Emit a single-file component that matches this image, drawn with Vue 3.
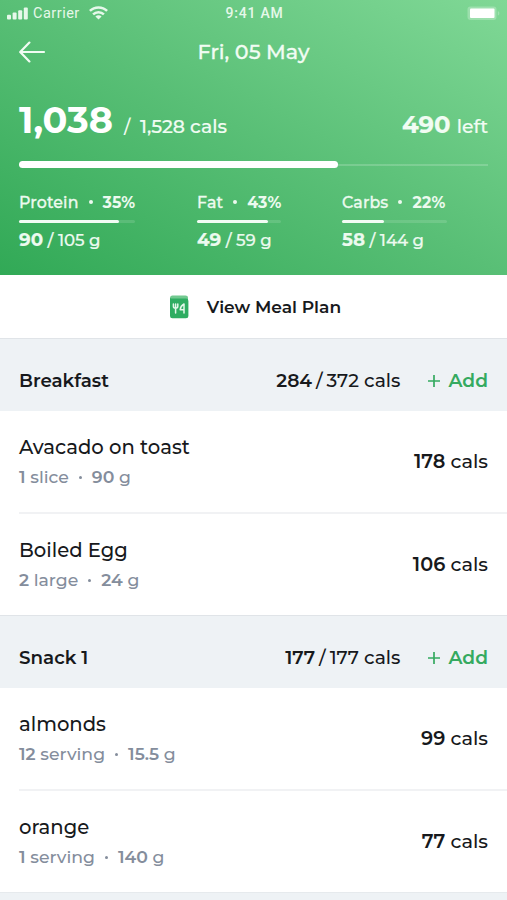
<script setup>
const macros = [
  { name: 'Protein', share: '35%', eaten: '90', goal: '105', fill: 86.5 },
  { name: 'Fat', share: '43%', eaten: '49', goal: '59', fill: 84.5 },
  { name: 'Carbs', share: '22%', eaten: '58', goal: '144', fill: 40 }
];

const meals = [
  {
    name: 'Breakfast',
    eaten: '284',
    goal: '372',
    items: [
      { name: 'Avacado on toast', count: '1', unit: 'slice', weight: '90', cals: '178' },
      { name: 'Boiled Egg', count: '2', unit: 'large', weight: '24', cals: '106' }
    ]
  },
  {
    name: 'Snack 1',
    eaten: '177',
    goal: '177',
    items: [
      { name: 'almonds', count: '12', unit: 'serving', weight: '15.5', cals: '99' },
      { name: 'orange', count: '1', unit: 'serving', weight: '140', cals: '77' }
    ]
  }
];
</script>

<template>
  <div class="screen">
    <header class="summary">
      <div class="status-bar">
        <div class="status-left">
          <svg class="signal" width="21" height="13" viewBox="0 0 21 13" fill="currentColor">
            <rect x="0" y="7.8" width="4" height="4.8" rx="1" />
            <rect x="5.6" y="5.6" width="4" height="7" rx="1" />
            <rect x="11.2" y="3.2" width="4" height="9.4" rx="1" />
            <rect x="16.8" y="0.6" width="4" height="12" rx="1" />
          </svg>
          <span class="carrier">Carrier</span>
          <svg class="wifi" width="19" height="14" viewBox="0 0 19 14" fill="none" stroke="currentColor">
            <path d="M0.9 4.9C5.6 0.3 13.4 0.3 18.1 4.9" stroke-width="2.5" />
            <path d="M4.1 8.3C7.1 5.4 11.9 5.4 14.9 8.3" stroke-width="2.5" />
            <path d="M9.5 13.4L6.4 10.5C8.1 8.9 10.9 8.9 12.6 10.5Z" fill="currentColor" stroke="none" />
          </svg>
        </div>
        <span class="clock">9:41 AM</span>
        <svg class="battery" width="33" height="15" viewBox="0 0 33 15" fill="#fff">
          <rect x="0.5" y="0.5" width="29" height="13.5" rx="3" fill-opacity="0.25" />
          <rect x="3" y="2.5" width="24.5" height="9.5" rx="1" />
          <path d="M30.8 5C32.9 5.9 32.9 8.7 30.8 9.6Z" fill-opacity="0.25" />
        </svg>
      </div>

      <nav class="nav">
        <svg width="27" height="22" viewBox="0 0 27 22" fill="none" stroke="currentColor" stroke-width="2.2" stroke-linecap="round" stroke-linejoin="round">
          <path d="M25 11H1.3M10.4 1.6L1.2 11L10.4 20.4" />
        </svg>
        <h1>Fri, 05 May</h1>
      </nav>

      <div class="totals">
        <span class="eaten">1,038</span>
        <span class="slash">/</span>
        <span class="goal">1,528 cals</span>
        <span class="left"><b>490</b> left</span>
      </div>
      <div class="total-track"><div class="total-fill"></div></div>

      <div class="macros">
        <div v-for="macro in macros" :key="macro.name" class="macro" :class="macro.name.toLowerCase()">
          <div class="macro-head">
            <span>{{ macro.name }}</span>
            <i class="dot"></i>
            <b>{{ macro.share }}</b>
          </div>
          <div class="macro-track">
            <div class="macro-fill" :style="{ width: macro.fill + '%' }"></div>
          </div>
          <div class="macro-value">
            <b>{{ macro.eaten }}</b>
            <i>/</i>
            <span>{{ macro.goal }} g</span>
          </div>
        </div>
      </div>
    </header>

    <div class="plan">
      <svg width="20" height="24" viewBox="0 0 20 24">
        <path d="M3.5 0.5H16.5Q19 0.5 19 2.5V6H1V3Q1 0.5 3.5 0.5Z" fill="#72c990" />
        <path d="M1 3Q1.8 3.6 3.5 3.6H17Q19.4 3.6 19.4 6V21Q19.4 23.3 17 23.3H3.4Q1 23.3 1 21Z" fill="#2fad62" />
        <g fill="none" stroke="#e4f7ea" stroke-width="1.5" stroke-linecap="round" stroke-linejoin="round">
          <path d="M4.4 9V11.2Q4.4 13.2 6.6 13.2Q8.8 13.2 8.8 11.2V9M6.6 9V18" />
          <path d="M15 18V9Q11.6 10.8 11.2 14.8H15" />
        </g>
      </svg>
      <span>View Meal Plan</span>
    </div>

    <section v-for="meal in meals" :key="meal.name" class="meal">
      <div class="meal-head">
        <h2>{{ meal.name }}</h2>
        <div class="meal-total">
          <b>{{ meal.eaten }}</b>
          <i>/</i>
          <span>{{ meal.goal }} cals</span>
        </div>
        <button type="button">
          <svg width="12" height="12" viewBox="0 0 12 12" stroke="currentColor" stroke-width="1.7">
            <path d="M6 0V12M0 6H12" />
          </svg>
          <span>Add</span>
        </button>
      </div>
      <div class="items">
        <article v-for="item in meal.items" :key="item.name" class="item">
          <div>
            <h3>{{ item.name }}</h3>
            <p>
              <span><b>{{ item.count }}</b> {{ item.unit }}</span>
              <i class="dot"></i>
              <span><b>{{ item.weight }}</b> g</span>
            </p>
          </div>
          <span class="cals"><b>{{ item.cals }}</b> cals</span>
        </article>
      </div>
    </section>
    <div class="next-meal"></div>
  </div>
</template>

<style>
body {
  margin: 0;
  background: #fff;
}
</style>

<style scoped>
.screen {
  box-sizing: border-box;
  width: 507px;
  height: 900px;
  overflow: hidden;
  display: flex;
  flex-direction: column;
  font-family: Montserrat, Inter, "Liberation Sans", sans-serif;
  font-weight: 500;
  color: #17191c;
  white-space: nowrap;
}

h1,
h2,
h3,
p {
  margin: 0;
}

b {
  font-weight: 600;
}

i {
  font-style: normal;
}

.summary {
  box-sizing: border-box;
  flex: none;
  height: 275px;
  padding: 0 19px;
  color: #fff;
  background: linear-gradient(to top right, #31a956 0%, #59bf76 50%, #80d896 100%);
}

.status-bar {
  display: grid;
  grid-template-columns: 1fr auto 1fr;
  align-items: center;
  height: 26px;
  margin: 0 -12px;
  font-family: Roboto, "Liberation Sans", sans-serif;
  color: #e6f8ea;
}

.status-left {
  display: flex;
  align-items: center;
}

.carrier {
  margin: 0 9px 0 5px;
  font-size: 14.5px;
  font-weight: 400;
  letter-spacing: 0.5px;
}

.clock {
  padding-left: 2px;
  font-size: 14px;
  font-weight: 500;
  letter-spacing: 0.8px;
}

.battery {
  justify-self: end;
}

.nav {
  display: grid;
  grid-template-columns: 1fr auto 1fr;
  align-items: center;
  height: 51px;
  color: #f1fcf3;
}

.nav h1 {
  font-size: 20.7px;
  font-weight: 500;
  -webkit-text-stroke: 0.3px;
}

.totals {
  display: flex;
  align-items: baseline;
  height: 60px;
  margin-top: 19px;
  line-height: 48px;
  color: #f1fcf3;
}

.eaten {
  width: 105px;
  font-size: 36.7px;
  font-weight: 700;
  color: #fff;
}

.slash {
  width: 16px;
  font-size: 18px;
}

.goal {
  font-size: 18.9px;
  -webkit-text-stroke: 0.2px;
}

.left {
  margin-left: auto;
  font-size: 18.9px;
  -webkit-text-stroke: 0.2px;
}

.left b {
  margin-right: 1px;
  font-size: 24.3px;
  font-weight: 700;
}

.total-track {
  display: flex;
  align-items: center;
  height: 7px;
  margin-top: 5px;
  background: linear-gradient(rgba(255, 255, 255, 0.18), rgba(255, 255, 255, 0.18)) center / 100% 2px no-repeat;
}

.total-fill {
  width: 68%;
  height: 7px;
  border-radius: 4px;
  background: #fff;
}

.macros {
  display: flex;
  margin-top: 22px;
  color: #ecfaef;
}

.macro.protein {
  width: 116px;
  margin-right: 62px;
}

.macro.fat {
  width: 84px;
  margin-right: 61px;
}

.macro.carbs {
  width: 105px;
}

.macro-head {
  display: flex;
  align-items: center;
  height: 24px;
  font-size: 15.8px;
  letter-spacing: 0.15px;
  -webkit-text-stroke: 0.3px;
}

.macro-head b {
  font-weight: 700;
  -webkit-text-stroke: 0;
}

.dot {
  flex: none;
  width: 4px;
  height: 4px;
  margin: 0 10px;
  border-radius: 50%;
  background: currentColor;
}

.macro-track {
  height: 3px;
  margin-top: 6px;
  border-radius: 2px;
  background: rgba(255, 255, 255, 0.13);
}

.macro-fill {
  height: 3px;
  border-radius: 2px;
  background: #f2fcf4;
}

.macro-value {
  display: flex;
  align-items: baseline;
  gap: 4.5px;
  margin-top: 5px;
  font-size: 16.6px;
  line-height: 24px;
  -webkit-text-stroke: 0.2px;
}

.macro-value b {
  font-size: 18.3px;
  font-weight: 700;
}

.plan {
  flex: none;
  display: flex;
  align-items: center;
  justify-content: center;
  gap: 18px;
  height: 63px;
  padding-left: 3px;
  font-size: 17.1px;
  font-weight: 600;
}

.meal {
  flex: none;
}

.meal-head {
  box-sizing: border-box;
  display: flex;
  align-items: center;
  height: 73px;
  padding: 11px 19px 0;
  border-top: 1px solid #e0e4e8;
  background: #eef2f5;
}

.meal-head h2 {
  margin-right: auto;
  font-size: 18.3px;
  font-weight: 600;
}

.meal-total {
  display: flex;
  align-items: baseline;
  gap: 4px;
  font-size: 18.7px;
}

.meal-head button {
  display: flex;
  align-items: center;
  gap: 8px;
  margin-left: 28px;
  padding: 0;
  border: none;
  background: none;
  font: 600 18.7px Montserrat, Inter, "Liberation Sans", sans-serif;
  color: #35aa60;
}

.item {
  box-sizing: border-box;
  display: flex;
  align-items: center;
  justify-content: space-between;
  height: 101px;
  margin-left: 19px;
  padding-right: 19px;
}

.item + .item {
  height: 103px;
  border-top: 2px solid #f1f2f4;
}

.item h3 {
  font-size: 19.6px;
  font-weight: 500;
  line-height: 28px;
}

.item p {
  display: flex;
  align-items: center;
  margin-top: 3px;
  font-size: 17.3px;
  line-height: 26px;
  color: #848d9c;
}

.item .dot {
  width: 3px;
  height: 3px;
}

.cals {
  padding-bottom: 1px;
  font-size: 19.3px;
}

.next-meal {
  flex: 1;
  border-top: 1px solid #e6eaed;
  background: #eef2f5;
}
</style>
